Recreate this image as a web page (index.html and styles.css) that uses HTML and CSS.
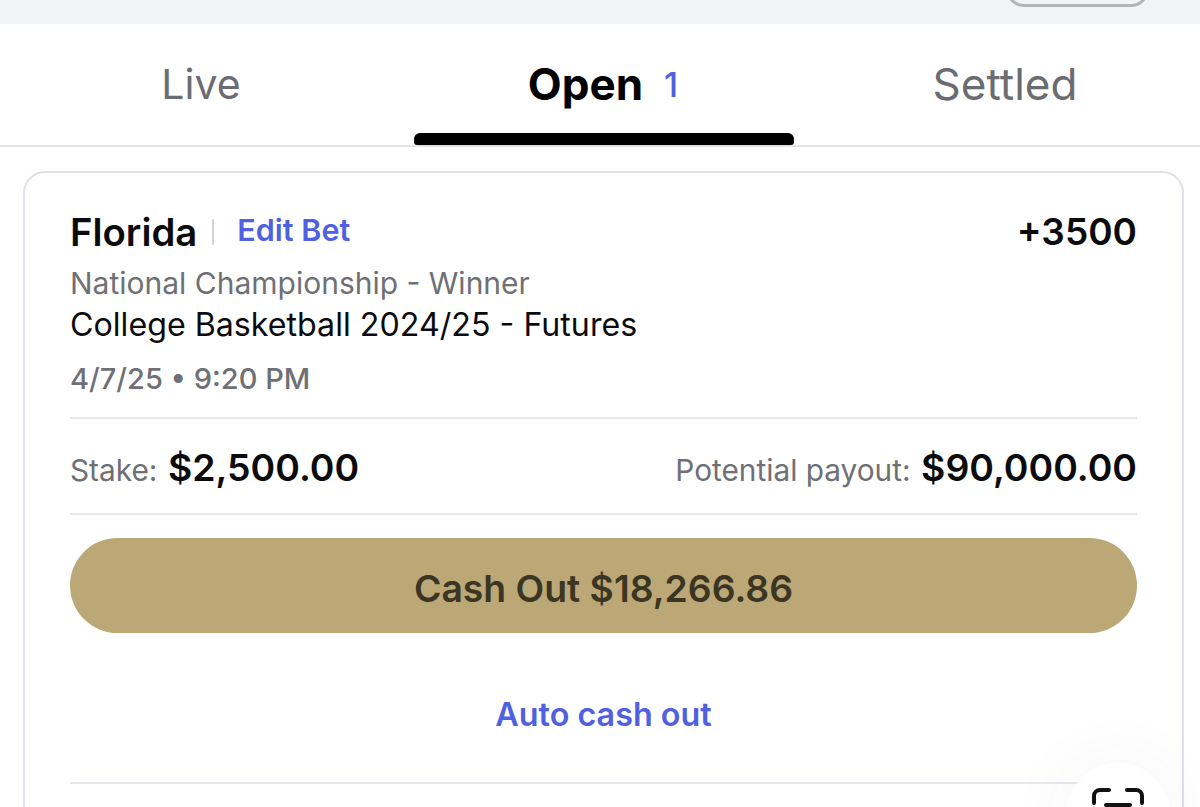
FILE: index.html
```html
<!DOCTYPE html>
<html lang="en">
<head>
    <meta charset="UTF-8">
    <meta name="viewport" content="width=device-width, initial-scale=1.0">
    <title>My Bets</title>
    <link rel="stylesheet" href="styles.css">
</head>
<body>
    <div class="top-band">
        <div class="top-pill"></div>
    </div>
    <nav class="tabs">
        <div class="tab">Live</div>
        <div class="tab active">Open <span class="count">1</span></div>
        <div class="tab settled">Settled</div>
    </nav>
    <div class="bet-card">
        <div class="bet-head">
            <div class="bet-title">
                <span class="team">Florida</span>
                <span class="divider"></span>
                <a class="link edit-link">Edit Bet</a>
            </div>
            <span class="odds">+3500</span>
        </div>
        <div class="market">National Championship - Winner</div>
        <div class="event">College Basketball 2024/25 - Futures</div>
        <div class="date">4/7/25 • 9:20 PM</div>
        <div class="amounts">
            <div><span class="amount-label">Stake:</span> <span class="amount">$2,500.00</span></div>
            <div><span class="amount-label">Potential payout:</span> <span class="amount">$90,000.00</span></div>
        </div>
        <button class="cash-out">Cash Out $18,266.86</button>
        <div class="auto-row"><a class="link auto-link">Auto cash out</a></div>
    </div>
    <!-- floating scan button, sits over the card corner -->
    <div class="scan-btn">
        <svg width="54" height="30" viewBox="0 0 54 30" fill="none" stroke="#111" stroke-width="4" stroke-linecap="round">
            <path d="M3 16V9a6 6 0 0 1 6-6h9"/>
            <path d="M51 16V9a6 6 0 0 0-6-6h-9"/>
            <path d="M15 18h24"/>
        </svg>
    </div>
</body>
</html>
```

FILE: styles.css
```css
body {
    font-family: 'Inter', 'Liberation Sans', sans-serif;
    margin: 0;
    height: 807px;
    background-color: #fff;
    position: relative;
    overflow: hidden;
}
.top-band {
    height: 24px;
    background-color: #f2f3f5;
    display: flex;
    justify-content: flex-end;
    padding-right: 51px;
    overflow: hidden;
}
.top-pill {
    width: 143px;
    height: 36px;
    margin-top: -29px;
    box-sizing: border-box;
    border: 3px solid #b4b4b8;
    border-radius: 18px;
}
.tabs {
    height: 121px;
    display: grid;
    grid-template-columns: 402px 402px 396px;
    border-bottom: 2px solid #e2e3e8;
}
.tab {
    position: relative;
    display: flex;
    justify-content: center;
    align-items: center;
    padding-bottom: 1px;
    font-size: 41px;
    color: #6b6c72;
}
.tab.settled {
    font-size: 44px;
    padding-left: 6px;
}
.tab.active {
    color: #000;
    font-size: 44px;
    font-weight: 700;
}
.tab.active::after {
    content: "";
    position: absolute;
    left: 12px;
    right: 10px;
    bottom: 0;
    height: 12px;
    background-color: #000;
    border-radius: 6px 6px 3px 3px;
}
.count {
    color: #4f61e0;
    font-size: 34px;
    font-weight: 500;
    margin-left: 21px;
}
.bet-card {
    margin: 24px 16px 0 23px;
    padding: 33px 45px 0;
    border: 2px solid #e0e0e8;
    border-radius: 22px;
    height: 640px;
}
.bet-head {
    display: flex;
    justify-content: space-between;
    align-items: center;
    height: 52px;
}
.bet-title {
    display: flex;
    align-items: center;
}
.team {
    font-size: 38.3px;
    font-weight: 600;
    color: #0b0b0d;
}
.odds {
    font-size: 37px;
    font-weight: 600;
    color: #0b0b0d;
    margin-bottom: 2px;
}
.divider {
    width: 2px;
    height: 26px;
    background-color: #d6d6da;
    margin: 0 23px 0 15px;
}
.link {
    color: #4f61e0;
    font-weight: 600;
}
.edit-link {
    font-size: 30.5px;
    margin-bottom: 6px;
}
.market {
    font-size: 30px;
    line-height: 40px;
    color: #6f7075;
    margin-top: 5px;
}
.event {
    font-size: 32.2px;
    line-height: 40px;
    color: #0b0b0d;
    margin-top: 2px;
}
.date {
    font-size: 29px;
    font-weight: 500;
    color: #6f7075;
    line-height: 40px;
    margin-top: 14px;
    padding-bottom: 18px;
    border-bottom: 2px solid #e6e6ec;
}
.amounts {
    display: flex;
    justify-content: space-between;
    align-items: center;
    height: 96px;
    box-sizing: border-box;
    padding-top: 3px;
    border-bottom: 2px solid #e6e6ec;
}
.amount-label {
    font-size: 29.8px;
    color: #6f7075;
}
.amount {
    font-size: 37.4px;
    font-weight: 600;
    color: #0b0b0d;
    margin-left: 6px;
}
.cash-out {
    display: block;
    width: 100%;
    height: 95px;
    margin-top: 23px;
    padding-top: 6px;
    border: none;
    border-radius: 48px;
    background-color: #bba876;
    color: #3b3523;
    font-family: inherit;
    font-size: 37.3px;
    font-weight: 600;
}
.auto-row {
    height: 151px;
    box-sizing: border-box;
    padding-top: 62px;
    text-align: center;
    border-bottom: 2px solid #e6e6ec;
}
.auto-link {
    font-size: 32.3px;
}
.scan-btn {
    position: absolute;
    left: 1066px;
    top: 763px;
    width: 104px;
    height: 104px;
    border-radius: 50%;
    background-color: #fff;
    box-shadow: 0 0 70px rgba(60, 60, 90, 0.06);
    display: flex;
    justify-content: center;
    padding-top: 24px;
    box-sizing: border-box;
}
```
